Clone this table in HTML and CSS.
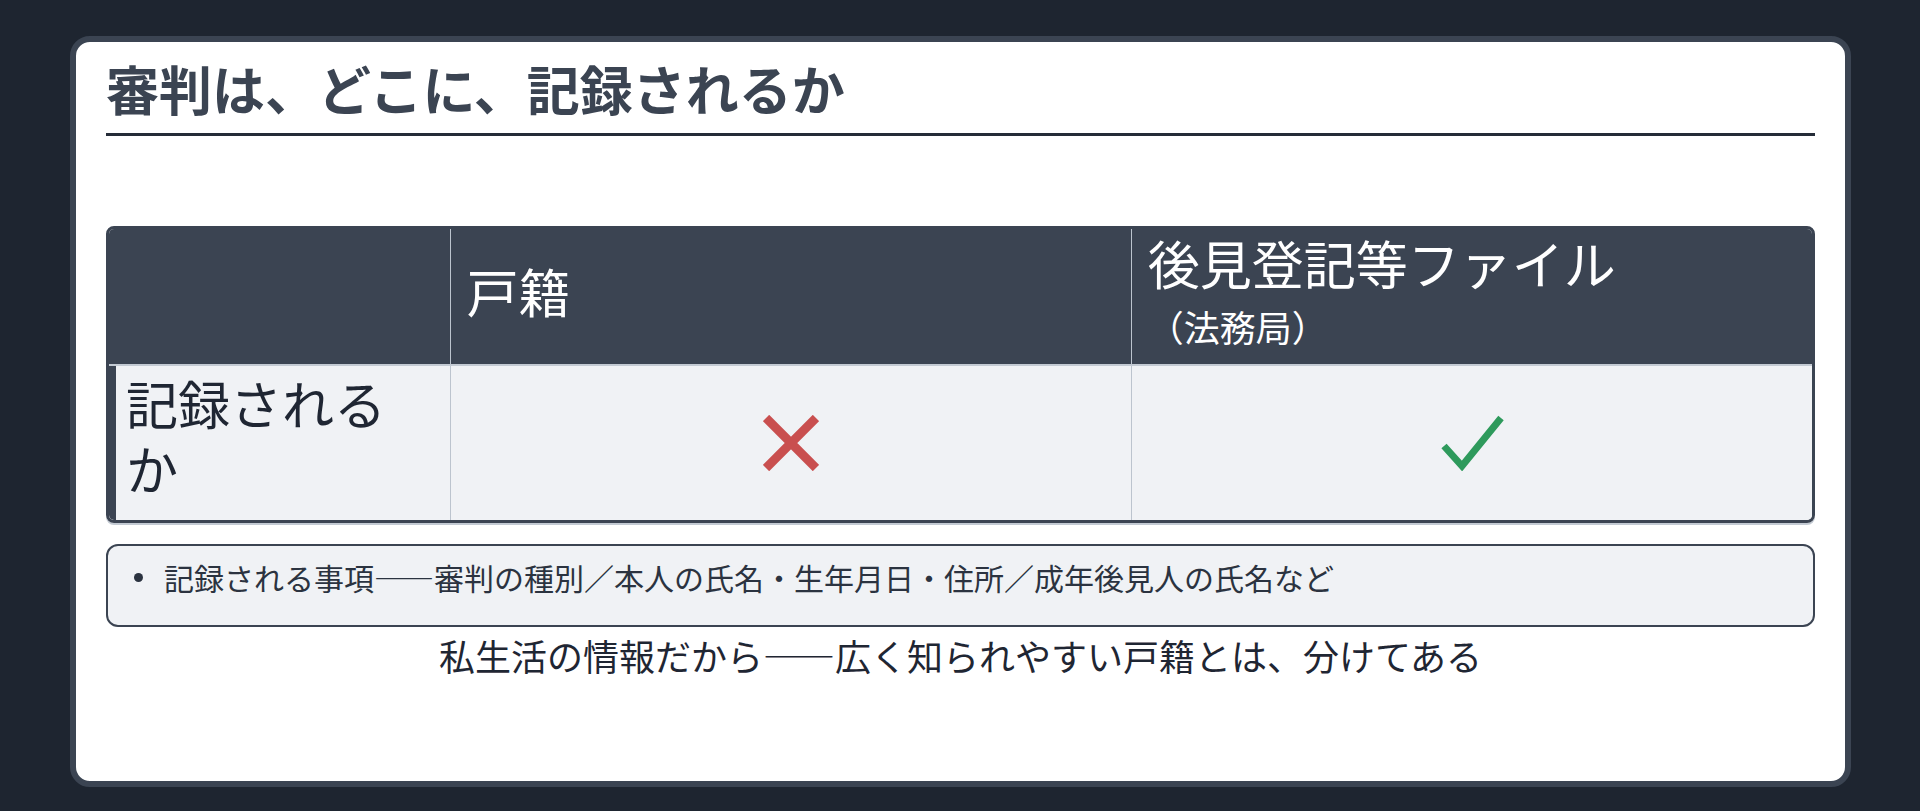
FILE: index.html
```html
<!DOCTYPE html>
<html lang="ja">
<head>
<meta charset="utf-8">
<title>審判は、どこに、記録されるか</title>
<link rel="stylesheet" href="styles.css">
</head>
<body>
<main class="card">
  <h1 class="title">審判は、どこに、記録されるか</h1>
  <div class="cmp-wrap">
    <table class="cmp">
      <colgroup>
        <col class="c1"><col class="c2"><col class="c3">
      </colgroup>
      <thead>
        <tr>
          <th class="corner"></th>
          <th>戸籍</th>
          <th>後見登記等ファイル<br><span class="sub">（法務局）</span></th>
        </tr>
      </thead>
      <tbody>
        <tr>
          <th class="rowhead">記録されるか</th>
          <td class="mark">
            <svg class="icon-x" width="56" height="56" viewBox="0 0 56 56" aria-label="×">
              <path d="M3 3 L53 53 M53 3 L3 53" stroke="#c94f4f" stroke-width="9" fill="none"/>
            </svg>
          </td>
          <td class="mark">
            <svg class="icon-check" width="64" height="56" viewBox="0 0 64 56" aria-label="✓">
              <path d="M4 31 L22 51 L61 3" stroke="#2e9a5c" stroke-width="7" fill="none" stroke-linejoin="miter"/>
            </svg>
          </td>
        </tr>
      </tbody>
    </table>
  </div>
  <ul class="notes">
    <li>記録される事項——審判の種別／本人の氏名・生年月日・住所／成年後見人の氏名など</li>
  </ul>
  <p class="caption">私生活の情報だから——広く知られやすい戸籍とは、分けてある</p>
</main>
</body>
</html>
```

FILE: styles.css
```css
html, body {
  height: 100%;
}
body {
  margin: 0;
  height: 811px;
  box-sizing: border-box;
  padding: 36px 69px 24px 70px;
  background: #1e2530;
  display: flex;
  font-family: "Noto Sans CJK JP", "Noto Sans", sans-serif;
  color: #1f2633;
}
.card {
  flex: 1;
  background: #ffffff;
  border: 6px solid #3b4452;
  border-radius: 20px;
  padding: 15px 30px 0;
  display: flex;
  flex-direction: column;
}
.title {
  margin: 0;
  font-size: 53px;
  font-weight: 700;
  line-height: 1.2;
  color: #3b4452;
  padding-bottom: 12px;
  border-bottom: 3px solid #252c38;
}
.cmp-wrap {
  margin-top: 90px;
  border: 3px solid #3b4452;
  border-radius: 8px;
  overflow: hidden;
  box-shadow: 0 2px 0 #c3cad3;
}
.cmp {
  width: 100%;
  border-collapse: separate;
  border-spacing: 0;
  table-layout: fixed;
}
.c1 { width: 20%; }
.c2 { width: 40%; }
.c3 { width: 40%; }
.cmp thead th {
  background: #3b4452;
  color: #ffffff;
  font-weight: 400;
  font-size: 52px;
  line-height: 1.1;
  text-align: left;
  vertical-align: middle;
  padding: 5px 16px 16px;
  border-bottom: 2px solid #c3cad3;
}
.cmp thead th + th {
  border-left: 1px solid #bcc4ce;
}
.sub {
  font-size: 36px;
}
.cmp tbody th,
.cmp tbody td {
  background: #f0f2f5;
}
.rowhead {
  font-weight: 400;
  font-size: 52px;
  line-height: 1.25;
  text-align: left;
  vertical-align: middle;
  color: #1f2633;
  padding: 4px 24px 20px 10px;
  border-left: 7px solid #3b4452;
}
.mark {
  text-align: center;
  vertical-align: middle;
  border-left: 1px solid #bcc4ce;
  padding: 0;
}
.mark svg {
  display: block;
  margin: 0 auto;
}
.notes {
  margin: 21px 0 0;
  padding: 9px 26px 25px;
  list-style: none;
  background: #f0f2f5;
  border: 2px solid #3b4452;
  border-radius: 12px;
}
.notes li {
  display: flex;
  align-items: center;
  gap: 21px;
  font-size: 30px;
  line-height: 1.5;
  color: #2b3340;
}
.notes li::before {
  content: "";
  flex: none;
  width: 9px;
  height: 9px;
  border-radius: 50%;
  background: #2b3340;
}
.caption {
  margin: 3px 0 0;
  text-align: center;
  font-size: 36px;
  line-height: 1.4;
  color: #1f2633;
}
```
